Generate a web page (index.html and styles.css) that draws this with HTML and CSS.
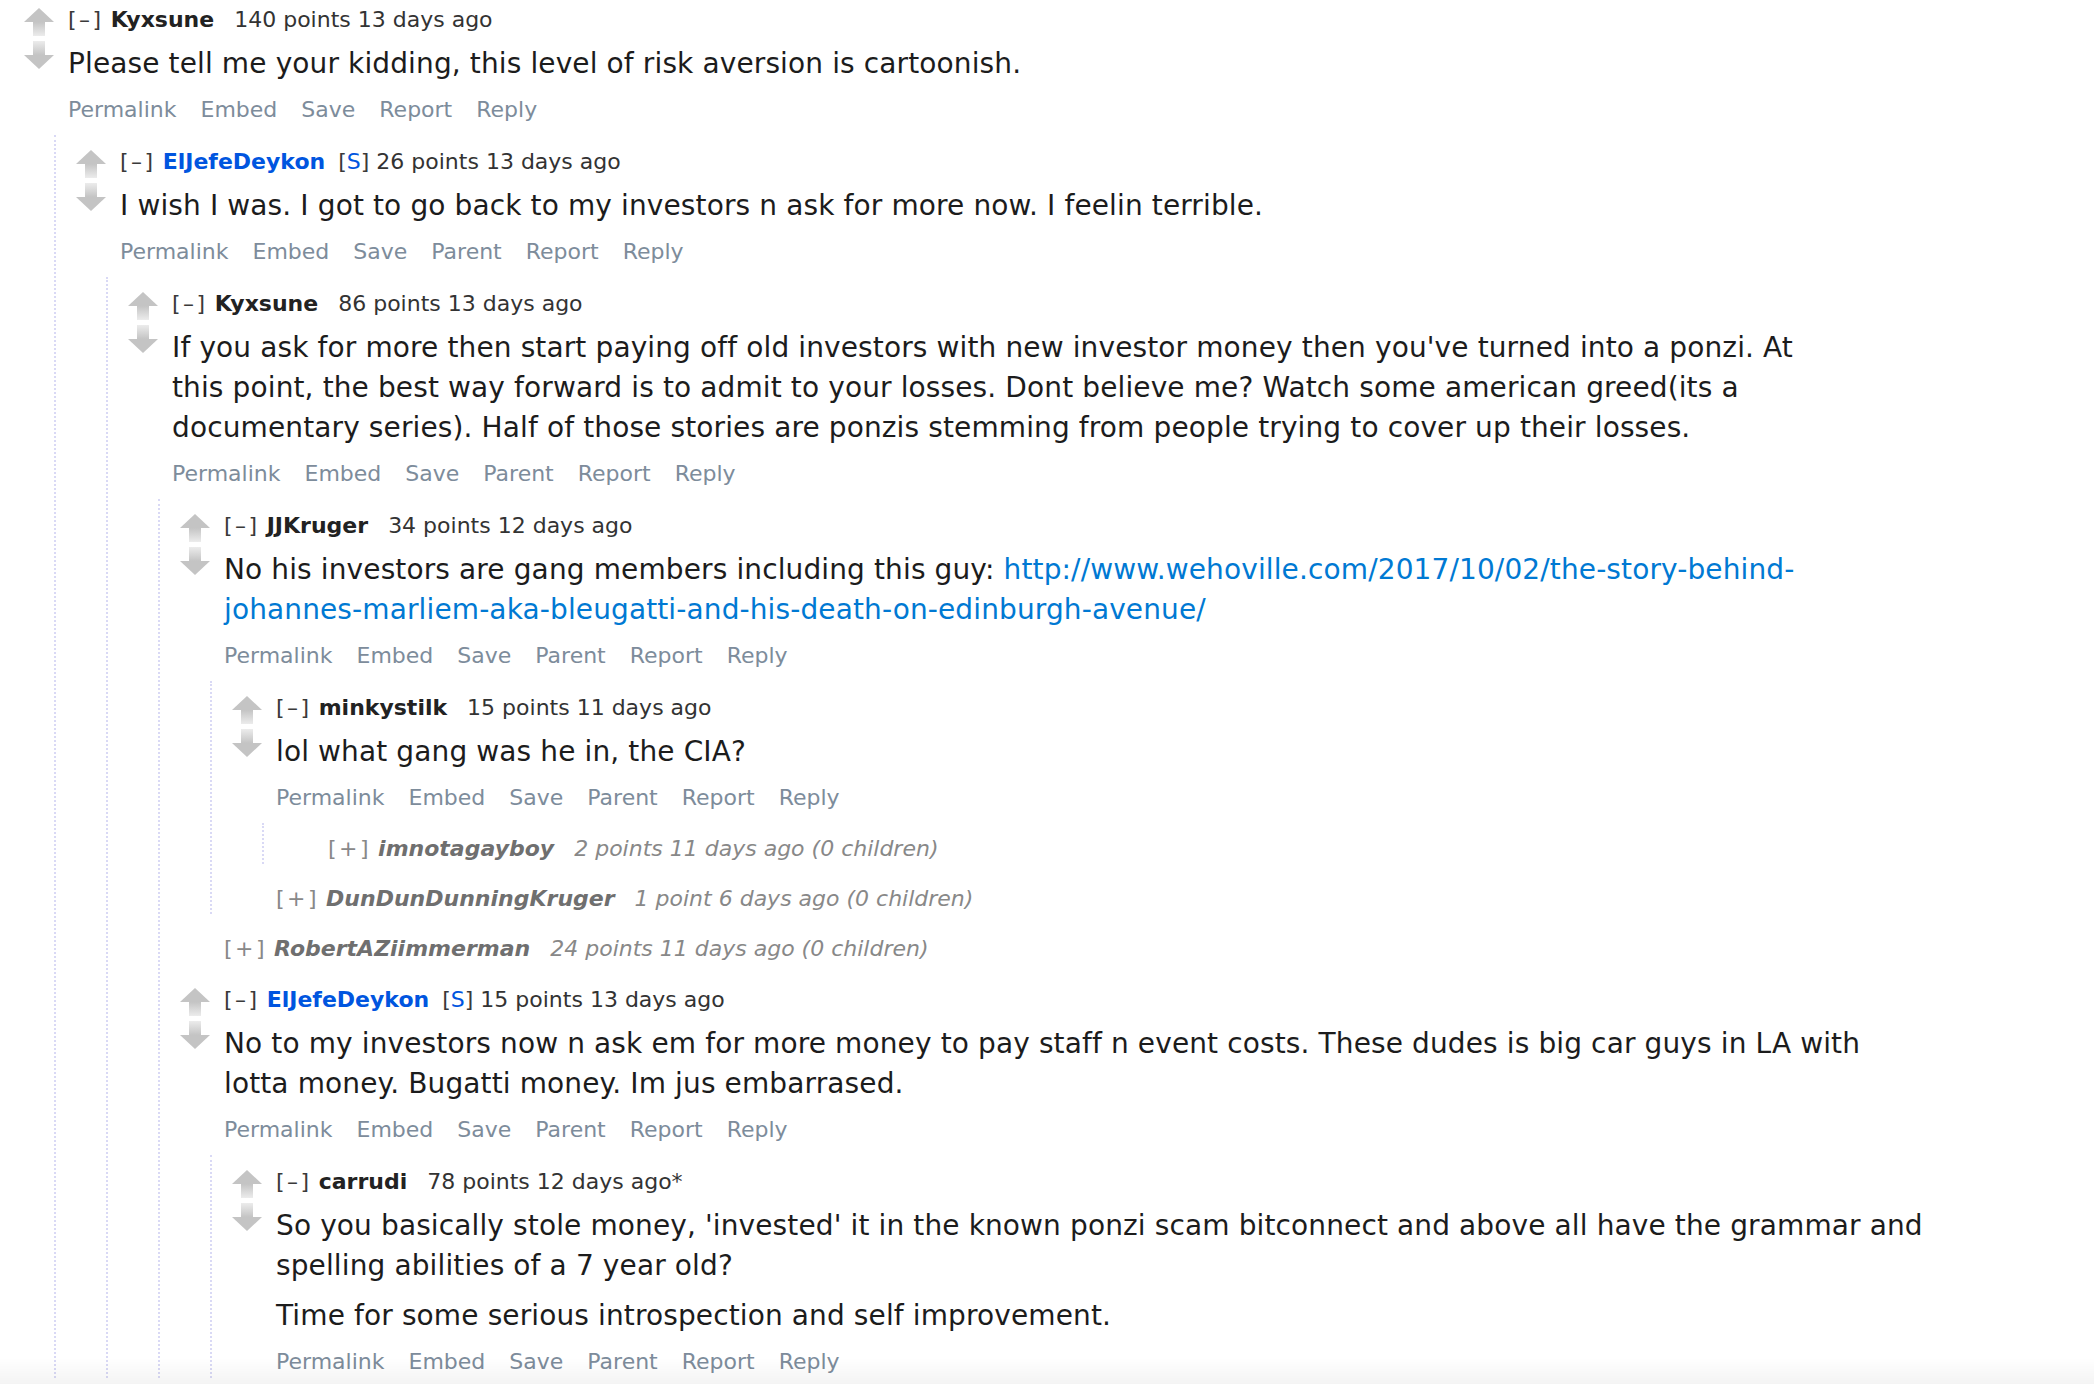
FILE: index.html
```html
<!DOCTYPE html>
<html lang="en">
<head>
<meta charset="utf-8">
<title>Comments</title>
<link rel="stylesheet" href="styles.css">
</head>
<body>
<svg class="defs" width="0" height="0" aria-hidden="true">
  <defs>
    <linearGradient id="shaftUp" x1="0" y1="0" x2="0" y2="1">
      <stop offset="0" stop-color="#c4c4c4"/>
      <stop offset="1" stop-color="#ececec"/>
    </linearGradient>
    <linearGradient id="shaftDown" x1="0" y1="1" x2="0" y2="0">
      <stop offset="0" stop-color="#c4c4c4"/>
      <stop offset="1" stop-color="#ececec"/>
    </linearGradient>
  </defs>
</svg>

<div class="thread">

  <div class="comment">
    <div class="row">
      <div class="midcol">
        <svg class="arrow up" viewBox="0 0 30 28"><path d="M15 0 L30 14 L0 14 Z" fill="#c4c4c4"/><rect x="9" y="14" width="12" height="14" fill="url(#shaftUp)"/></svg>
        <svg class="arrow down" viewBox="0 0 30 28"><rect x="9" y="0" width="12" height="14" fill="url(#shaftDown)"/><path d="M0 14 L30 14 L15 28 Z" fill="#c4c4c4"/></svg>
      </div>
      <div class="entry">
        <p class="tagline"><span class="expand">[–]</span><a class="author">Kyxsune</a><span class="score">140 points</span><time>13 days ago</time></p>
        <div class="md"><p>Please tell me your kidding, this level of risk aversion is cartoonish.</p></div>
        <ul class="buttons"><li>Permalink</li><li>Embed</li><li>Save</li><li>Report</li><li>Reply</li></ul>
      </div>
    </div>

    <div class="child">
      <div class="comment">
        <div class="row">
          <div class="midcol">
            <svg class="arrow up" viewBox="0 0 30 28"><path d="M15 0 L30 14 L0 14 Z" fill="#c4c4c4"/><rect x="9" y="14" width="12" height="14" fill="url(#shaftUp)"/></svg>
            <svg class="arrow down" viewBox="0 0 30 28"><rect x="9" y="0" width="12" height="14" fill="url(#shaftDown)"/><path d="M0 14 L30 14 L15 28 Z" fill="#c4c4c4"/></svg>
          </div>
          <div class="entry">
            <p class="tagline"><span class="expand">[–]</span><a class="author submitter">ElJefeDeykon</a><span class="userattrs">[<a>S</a>]</span><span class="score">26 points</span><time>13 days ago</time></p>
            <div class="md"><p>I wish I was. I got to go back to my investors n ask for more now. I feelin terrible.</p></div>
            <ul class="buttons"><li>Permalink</li><li>Embed</li><li>Save</li><li>Parent</li><li>Report</li><li>Reply</li></ul>
          </div>
        </div>

        <div class="child">
          <div class="comment">
            <div class="row">
              <div class="midcol">
                <svg class="arrow up" viewBox="0 0 30 28"><path d="M15 0 L30 14 L0 14 Z" fill="#c4c4c4"/><rect x="9" y="14" width="12" height="14" fill="url(#shaftUp)"/></svg>
                <svg class="arrow down" viewBox="0 0 30 28"><rect x="9" y="0" width="12" height="14" fill="url(#shaftDown)"/><path d="M0 14 L30 14 L15 28 Z" fill="#c4c4c4"/></svg>
              </div>
              <div class="entry">
                <p class="tagline"><span class="expand">[–]</span><a class="author">Kyxsune</a><span class="score">86 points</span><time>13 days ago</time></p>
                <div class="md"><p>If you ask for more then start paying off old investors with new investor money then you've turned into a ponzi. At this point, the best way forward is to admit to your losses. Dont believe me? Watch some american greed(its a documentary series). Half of those stories are ponzis stemming from people trying to cover up their losses.</p></div>
                <ul class="buttons"><li>Permalink</li><li>Embed</li><li>Save</li><li>Parent</li><li>Report</li><li>Reply</li></ul>
              </div>
            </div>

            <div class="child">
              <div class="comment">
                <div class="row">
                  <div class="midcol">
                    <svg class="arrow up" viewBox="0 0 30 28"><path d="M15 0 L30 14 L0 14 Z" fill="#c4c4c4"/><rect x="9" y="14" width="12" height="14" fill="url(#shaftUp)"/></svg>
                    <svg class="arrow down" viewBox="0 0 30 28"><rect x="9" y="0" width="12" height="14" fill="url(#shaftDown)"/><path d="M0 14 L30 14 L15 28 Z" fill="#c4c4c4"/></svg>
                  </div>
                  <div class="entry">
                    <p class="tagline"><span class="expand">[–]</span><a class="author">JJKruger</a><span class="score">34 points</span><time>12 days ago</time></p>
                    <div class="md"><p>No his investors are gang members including this guy: <a class="link">http://www.wehoville.com/2017/10/02/the-story-behind-johannes-marliem-aka-bleugatti-and-his-death-on-edinburgh-avenue/</a></p></div>
                    <ul class="buttons"><li>Permalink</li><li>Embed</li><li>Save</li><li>Parent</li><li>Report</li><li>Reply</li></ul>
                  </div>
                </div>

                <div class="child">
                  <div class="comment">
                    <div class="row">
                      <div class="midcol">
                        <svg class="arrow up" viewBox="0 0 30 28"><path d="M15 0 L30 14 L0 14 Z" fill="#c4c4c4"/><rect x="9" y="14" width="12" height="14" fill="url(#shaftUp)"/></svg>
                        <svg class="arrow down" viewBox="0 0 30 28"><rect x="9" y="0" width="12" height="14" fill="url(#shaftDown)"/><path d="M0 14 L30 14 L15 28 Z" fill="#c4c4c4"/></svg>
                      </div>
                      <div class="entry">
                        <p class="tagline"><span class="expand">[–]</span><a class="author">minkystilk</a><span class="score">15 points</span><time>11 days ago</time></p>
                        <div class="md"><p>lol what gang was he in, the CIA?</p></div>
                        <ul class="buttons"><li>Permalink</li><li>Embed</li><li>Save</li><li>Parent</li><li>Report</li><li>Reply</li></ul>
                      </div>
                    </div>

                    <div class="child">
                      <div class="comment collapsed">
                        <div class="row">
                          <div class="midcol"></div>
                          <div class="entry">
                            <p class="tagline"><span class="expand">[+]</span><a class="author">imnotagayboy</a><span class="score">2 points</span><time>11 days ago (0 children)</time></p>
                          </div>
                        </div>
                      </div>
                    </div>
                  </div>

                  <div class="comment collapsed">
                    <div class="row">
                      <div class="midcol"></div>
                      <div class="entry">
                        <p class="tagline"><span class="expand">[+]</span><a class="author">DunDunDunningKruger</a><span class="score">1 point</span><time>6 days ago (0 children)</time></p>
                      </div>
                    </div>
                  </div>
                </div>
              </div>

              <div class="comment collapsed">
                <div class="row">
                  <div class="midcol"></div>
                  <div class="entry">
                    <p class="tagline"><span class="expand">[+]</span><a class="author">RobertAZiimmerman</a><span class="score">24 points</span><time>11 days ago (0 children)</time></p>
                  </div>
                </div>
              </div>

              <div class="comment">
                <div class="row">
                  <div class="midcol">
                    <svg class="arrow up" viewBox="0 0 30 28"><path d="M15 0 L30 14 L0 14 Z" fill="#c4c4c4"/><rect x="9" y="14" width="12" height="14" fill="url(#shaftUp)"/></svg>
                    <svg class="arrow down" viewBox="0 0 30 28"><rect x="9" y="0" width="12" height="14" fill="url(#shaftDown)"/><path d="M0 14 L30 14 L15 28 Z" fill="#c4c4c4"/></svg>
                  </div>
                  <div class="entry">
                    <p class="tagline"><span class="expand">[–]</span><a class="author submitter">ElJefeDeykon</a><span class="userattrs">[<a>S</a>]</span><span class="score">15 points</span><time>13 days ago</time></p>
                    <div class="md"><p>No to my investors now n ask em for more money to pay staff n event costs. These dudes is big car guys in LA with lotta money. Bugatti money. Im jus embarrased.</p></div>
                    <ul class="buttons"><li>Permalink</li><li>Embed</li><li>Save</li><li>Parent</li><li>Report</li><li>Reply</li></ul>
                  </div>
                </div>

                <div class="child">
                  <div class="comment">
                    <div class="row">
                      <div class="midcol">
                        <svg class="arrow up" viewBox="0 0 30 28"><path d="M15 0 L30 14 L0 14 Z" fill="#c4c4c4"/><rect x="9" y="14" width="12" height="14" fill="url(#shaftUp)"/></svg>
                        <svg class="arrow down" viewBox="0 0 30 28"><rect x="9" y="0" width="12" height="14" fill="url(#shaftDown)"/><path d="M0 14 L30 14 L15 28 Z" fill="#c4c4c4"/></svg>
                      </div>
                      <div class="entry">
                        <p class="tagline"><span class="expand">[–]</span><a class="author">carrudi</a><span class="score">78 points</span><time>12 days ago*</time></p>
                        <div class="md"><p>So you basically stole money, 'invested' it in the known ponzi scam bitconnect and above all have the grammar and spelling abilities of a 7 year old?</p><p>Time for some serious introspection and self improvement.</p></div>
                        <ul class="buttons"><li>Permalink</li><li>Embed</li><li>Save</li><li>Parent</li><li>Report</li><li>Reply</li></ul>
                      </div>
                    </div>
                  </div>
                </div>
              </div>
            </div>
          </div>
        </div>
      </div>
    </div>
  </div>

</div>
<div class="bottom-shade"></div>
</body>
</html>
```

FILE: styles.css
```css
html, body {
  margin: 0;
  background: #fff;
}

body {
  font-family: "DejaVu Sans", Verdana, sans-serif;
  color: #222;
  padding: 4px 0 0 4px;
  overflow: hidden;
  height: 1384px;
  box-sizing: border-box;
}

.defs {
  width: 0;
  height: 0;
  overflow: hidden;
  display: block;
}

.comment + .comment {
  margin-top: 20px;
}

.row {
  display: flex;
  align-items: flex-start;
}

.midcol {
  flex: 0 0 64px;
  width: 64px;
  display: flex;
  flex-direction: column;
  padding-left: 20px;
  box-sizing: border-box;
}

.arrow {
  display: block;
  width: 30px;
  height: 28px;
}

.arrow.up {
  margin-top: 4px;
}

.arrow.down {
  margin-top: 5px;
}

.entry {
  flex: 1 1 auto;
  min-width: 0;
}

.tagline {
  display: flex;
  align-items: baseline;
  margin: 0;
  font-size: 22px;
  line-height: 32px;
  color: #333;
  white-space: nowrap;
}

.tagline > * + * {
  margin-left: 7px;
}

.tagline .expand {
  color: #3a3a3a;
  letter-spacing: 2.5px;
}

.tagline .author {
  font-weight: bold;
  color: #222;
  margin-left: 7px;
}

.tagline .author + .score {
  margin-left: 20px;
}

.tagline .submitter {
  color: #0055df;
}

.tagline .userattrs {
  margin-left: 13px;
  color: #3a3a3a;
}

.tagline .userattrs a {
  color: #0055df;
}

.md {
  margin-top: 8px;
  font-size: 28px;
  line-height: 40px;
  letter-spacing: 0.12px;
  color: #1c1c1c;
  max-width: 1672px;
}

.md p {
  margin: 0;
}

.md p + p {
  margin-top: 10px;
}

.md .link {
  color: #0079d3;
}

.buttons {
  display: flex;
  gap: 24px;
  list-style: none;
  margin: 10px 0 0;
  padding: 0;
  font-size: 22px;
  line-height: 32px;
  color: #7d8c9b;
}

.child {
  margin-top: 9px;
  padding-top: 11px;
  margin-left: 50px;
  border-left: 2px dotted #d9d9f5;
}

.collapsed .tagline {
  line-height: 30px;
  font-style: italic;
  color: #888;
}

.collapsed .tagline .expand {
  font-style: normal;
  color: #888;
}

.collapsed .tagline .author {
  color: #6f6f6f;
}

.bottom-shade {
  position: fixed;
  left: 0;
  right: 0;
  bottom: 0;
  height: 26px;
  background: linear-gradient(rgba(0, 0, 0, 0), rgba(0, 0, 0, 0.045));
  pointer-events: none;
}
```
